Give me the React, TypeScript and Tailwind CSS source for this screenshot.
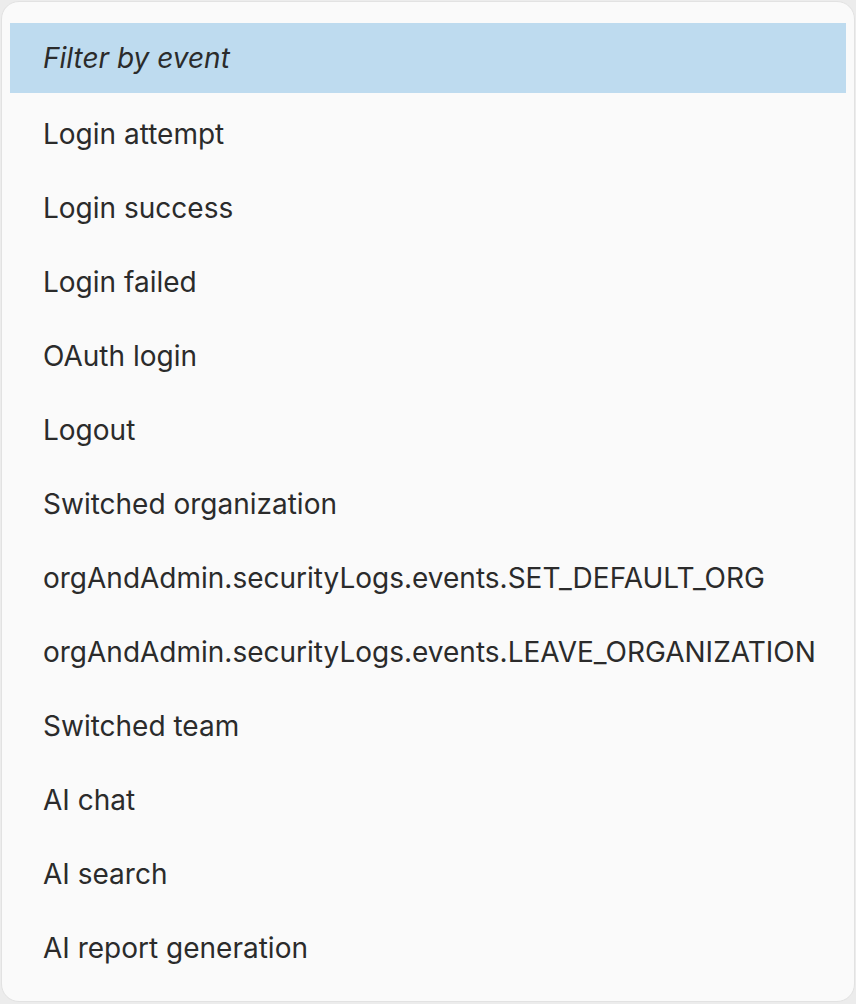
import React from "react";

const events = [
  "Login attempt",
  "Login success",
  "Login failed",
  "OAuth login",
  "Logout",
  "Switched organization",
  "orgAndAdmin.securityLogs.events.SET_DEFAULT_ORG",
  "orgAndAdmin.securityLogs.events.LEAVE_ORGANIZATION",
  "Switched team",
  "AI chat",
  "AI search",
  "AI report generation",
];

const App: React.FC = () => {
  return (
    <div
      className="h-[1004px] w-[856px] bg-[#ececec] p-[1px]"
      style={{ fontFamily: "Inter, 'Noto Sans', sans-serif" }}
    >
      <div className="h-[1001px] rounded-[18px] border border-[#e2e2e2] bg-[#fafafa] px-2 pt-[19px]">
        <ul className="flex flex-col">
          <li className="my-[2px] flex h-[70px] items-center bg-[#bedbef] pl-[33px] pb-[1px] text-[28px] italic text-[#2b2b2b]">
            Filter by event
          </li>
          {events.map((e) => (
            <li
              key={e}
              className="my-[2px] flex h-[70px] items-center pl-[33px] pt-[3px] text-[28px] text-[#2b2b2b]"
            >
              {e}
            </li>
          ))}
        </ul>
      </div>
    </div>
  );
};

export default App;
